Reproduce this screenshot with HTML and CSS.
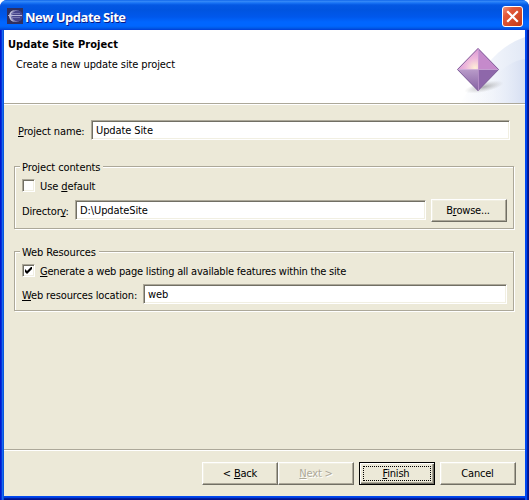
FILE: index.html
```html
<!DOCTYPE html>
<html lang="en">
<head>
<meta charset="utf-8">
<title>New Update Site</title>
<link rel="stylesheet" href="styles.css">
</head>
<body>
<main class="window">
  <header class="titlebar">
    <svg class="app-icon" width="16" height="16" viewBox="0 0 16 16">
      <rect width="16" height="16" fill="#303060"/>
      <circle cx="9" cy="8" r="6" fill="#8484b8"/>
      <circle cx="10.500" cy="8" r="5.400" fill="#45438a"/>
      <path d="M8 2A6 6 0 0 0 8 14L6 13A6.500 6.500 0 0 1 6 3Z" fill="#c6c6df"/>
      <path d="M1 7.500h14" stroke="#b9b9dc"/>
      <path d="M4 5.500h9M4 9.500h9" stroke="#7675ae"/>
    </svg>
    <h1 class="title">New Update Site</h1>
    <button class="close" aria-label="Close"><svg width="21" height="21" viewBox="0 0 21 21">
      <defs><linearGradient id="red" x1="0" y1="0" x2="1" y2="1"><stop offset="0" stop-color="#f09a80"/><stop offset=".3" stop-color="#e2593a"/><stop offset="1" stop-color="#c43813"/></linearGradient></defs>
      <rect x=".5" y=".5" width="20" height="20" rx="2.5" fill="url(#red)" stroke="#fff"/>
      <path d="M6 6L15 15M15 6L6 15" stroke="#fff" stroke-width="2.2" stroke-linecap="square"/>
    </svg></button>
  </header>
  <section class="banner">
    <div class="banner-text">
      <h2>Update Site Project</h2>
      <p>Create a new update site project</p>
    </div>
    <svg class="banner-art" width="105" height="73" viewBox="420 30 105 73">
      <defs>
        <linearGradient id="arc" x1="0" y1="0" x2="1" y2="0"><stop offset="0" stop-color="#fff"/><stop offset=".45" stop-color="#f2f5fb"/><stop offset="1" stop-color="#e2e9f6"/></linearGradient>
        <linearGradient id="arc2" x1="0" y1="0" x2="1" y2="0"><stop offset="0" stop-color="#fff" stop-opacity="0"/><stop offset="1" stop-color="#d6dff2"/></linearGradient>
        <radialGradient id="shade"><stop offset="0" stop-color="#777" stop-opacity=".55"/><stop offset="1" stop-color="#999" stop-opacity="0"/></radialGradient>
        <radialGradient id="glow" gradientUnits="userSpaceOnUse" cx="475" cy="68" r="21"><stop offset="0" stop-color="#fff0d6"/><stop offset=".45" stop-color="#eeb8dc"/><stop offset="1" stop-color="#d692d2"/></radialGradient>
        <linearGradient id="low" x1="0" y1="0" x2="0" y2="1"><stop offset="0" stop-color="#b99bc9"/><stop offset="1" stop-color="#8560a2"/></linearGradient>
      </defs>
      <path d="M525 37Q502 45 487 65T460 103H525Z" fill="url(#arc)"/>
      <path d="M525 59Q500 62 475 103H525Z" fill="url(#arc2)"/>
      <ellipse cx="484" cy="87" rx="20" ry="5" transform="rotate(-12 484 87)" fill="url(#shade)"/>
      <path d="M478 48L457 69.500H478Z" fill="url(#glow)"/>
      <path d="M478 48L499 69.500H478Z" fill="#c58acb"/>
      <path d="M457 69.500H478V91Z" fill="url(#low)"/>
      <path d="M478 69.500H499L478 91Z" fill="#8e67aa"/>
      <path d="M478 48.500L457.500 69.500 478 90.500 498.500 69.500Z" fill="none" stroke="#84669e"/>
      <path d="M458 69.500H498M478.500 49V90" stroke="#cda5d8" opacity=".6"/>
    </svg>
  </section>
  <section class="body">
    <div class="row project"><label><u>P</u>roject name:</label><div class="field"><span>Update Site</span></div></div>
    <fieldset class="contents">
      <legend>Project contents</legend>
      <label class="check"><i class="box"></i><span>Use <u>d</u>efault</span></label>
      <div class="row"><label>Director<u>y</u>:</label><div class="field"><span>D:\UpdateSite</span></div><button class="btn">B<u>r</u>owse...</button></div>
    </fieldset>
    <fieldset class="resources">
      <legend>Web Resources</legend>
      <label class="check"><i class="box"><svg width="7" height="7" viewBox="0 0 7 7"><path d="M0 2L2 4 7-1V2L2 7 0 5Z" fill="#000"/></svg></i><span class="generate"><u>G</u>enerate a web page listing all available features within the site</span></label>
      <div class="row"><label><u>W</u>eb resources location:</label><div class="field"><span>web</span></div></div>
    </fieldset>
  </section>
  <footer class="footer">
    <button class="btn"><span>&lt; <u>B</u>ack</span></button>
    <button class="btn disabled"><span><u>N</u>ext &gt;</span></button>
    <button class="btn primary"><span><u>F</u>inish</span></button>
    <button class="btn cancel"><span>Cancel</span></button>
  </footer>
</main>
</body>
</html>
```
FILE: styles.css
```css
* { box-sizing: border-box; }
body { margin: 0; width: 529px; height: 500px; overflow: hidden; background: #fff; color: #000; font: 11px/14px "DejaVu Sans Condensed", "DejaVu Sans", sans-serif; font-stretch: condensed; letter-spacing: -.1px; white-space: nowrap; }
h1, h2, p, fieldset, legend { margin: 0; padding: 0; font-size: inherit; }
button { font: inherit; font-stretch: condensed; letter-spacing: -.2px; color: inherit; padding: 0; margin: 0; }
u { text-underline-offset: 1px; text-decoration-thickness: 1px; text-decoration-skip-ink: none; }

.window { width: 529px; height: 500px; padding: 0 4px 4px; display: flex; flex-direction: column; border-radius: 7px 7px 0 0; overflow: hidden;
  background: linear-gradient(90deg, #0019cf 0 1px, #0831d9 1px 2px, #166aee 2px 3px, #0855dd 3px 4px, transparent 4px 525px, #0048f1 525px 527px, #001da0 527px 528px, #00138c 528px), linear-gradient(#0048f1 0 497px, #0040e0 497px 498px, #001da0 498px 499px, #00138c 499px); }
.titlebar { height: 30px; flex: none; margin: 0 -4px; padding: 6px 6px 0 7px; display: flex; background: linear-gradient(#0058e6 0, #3a8cf8 1px, #1873f5 3px, #0458e3 5px, #0054e0 10px, #0058ec 17px, #0066ff 22px, #0066ff 26px, #005be8 28px, #003dd7 30px); }
.app-icon { margin-top: 2px; }
.title { flex: 1; margin: 2px 0 0 2px; font: bold 13px/18px "Open Sans", "Noto Sans", sans-serif; letter-spacing: -.5px; color: #fff; text-shadow: 1px 1px #0a1883; }
.close { width: 21px; height: 21px; border: 0; background: none; }
.close svg { display: block; }

.banner { height: 75px; flex: none; background: #fff; display: flex; justify-content: space-between; border-bottom: 1px solid #fff; box-shadow: inset 0 -1px #aca899; }
.banner-text { padding: 8px 0 0 4px; }
.banner-text h2 { letter-spacing: .06px; }
.banner-text p { padding: 6px 0 0 8px; }
.body { height: 344px; flex: none; background: #ece9d8; padding: 15px 10px 0; }
.row { display: flex; align-items: flex-start; }
.row label { padding-top: 5px; flex: none; letter-spacing: -.14px; }
.field { flex: 1; height: 20px; padding: 3px 4px 0; line-height: 13px; background: #fff; border: 1px solid; border-color: #aca899 #fff #fff #aca899; box-shadow: inset 1px 1px #716f64, inset -1px -1px #f1efe2; }
.project { padding: 0 5px 0 4px; }
.project label { width: 73px; }
fieldset { position: relative; min-width: 0; border: 1px solid #aca899; box-shadow: 1px 1px #fff, inset 1px 1px #fff; width: 500px; }
legend { position: absolute; top: -6px; left: 5px; padding: 0 3px 0 2px; line-height: 13px; background: #ece9d8; }
.contents { margin-top: 26px; height: 63px; padding: 12px 6px 0 7px; }
.resources { margin-top: 22px; height: 60px; padding: 12px 6px 0 7px; }
.check { display: flex; height: 13px; gap: 5px; }
.check span { line-height: 16px; }
.generate { letter-spacing: -.21px; }
.box { width: 13px; height: 13px; padding: 2px; background: #fff; border: 1px solid; border-color: #aca899 #fff #fff #aca899; box-shadow: inset 1px 1px #716f64, inset -1px -1px #f1efe2; }
.box svg { display: block; }
.contents .row { margin-top: 7px; }
.contents .row label { width: 53px; padding-top: 6px; }
.contents .field { margin-top: 1px; }
.contents .btn { margin-left: 5px; padding-right: 2px; }
.resources .row { margin-top: 7px; }
.resources .row label { width: 121px; }

.footer { height: 47px; flex: none; display: flex; justify-content: flex-end; background: #ece9d8; border-top: 1px solid #aca899; box-shadow: inset 0 1px #fff; padding: 12px 9px 0 0; }
.btn { width: 76px; height: 23px; flex: none; line-height: 14px; background: #ece9d8; border: 1px solid; border-color: #fff #716f64 #716f64 #fff; box-shadow: inset -1px -1px #aca899, inset 1px 1px #f1efe2; }
.disabled { color: #aca899; text-shadow: 1px 1px #fff; }
.primary { margin-left: 5px; border: 1px solid #000; padding: 3px; box-shadow: inset 1px 1px #fff, inset -1px -1px #716f64, inset -2px -2px #aca899; }
.primary span { display: block; border: 1px dotted #000; height: 15px; line-height: 13px; padding-right: 2px; }
.cancel { margin-left: 5px; padding-right: 1px; }
```
